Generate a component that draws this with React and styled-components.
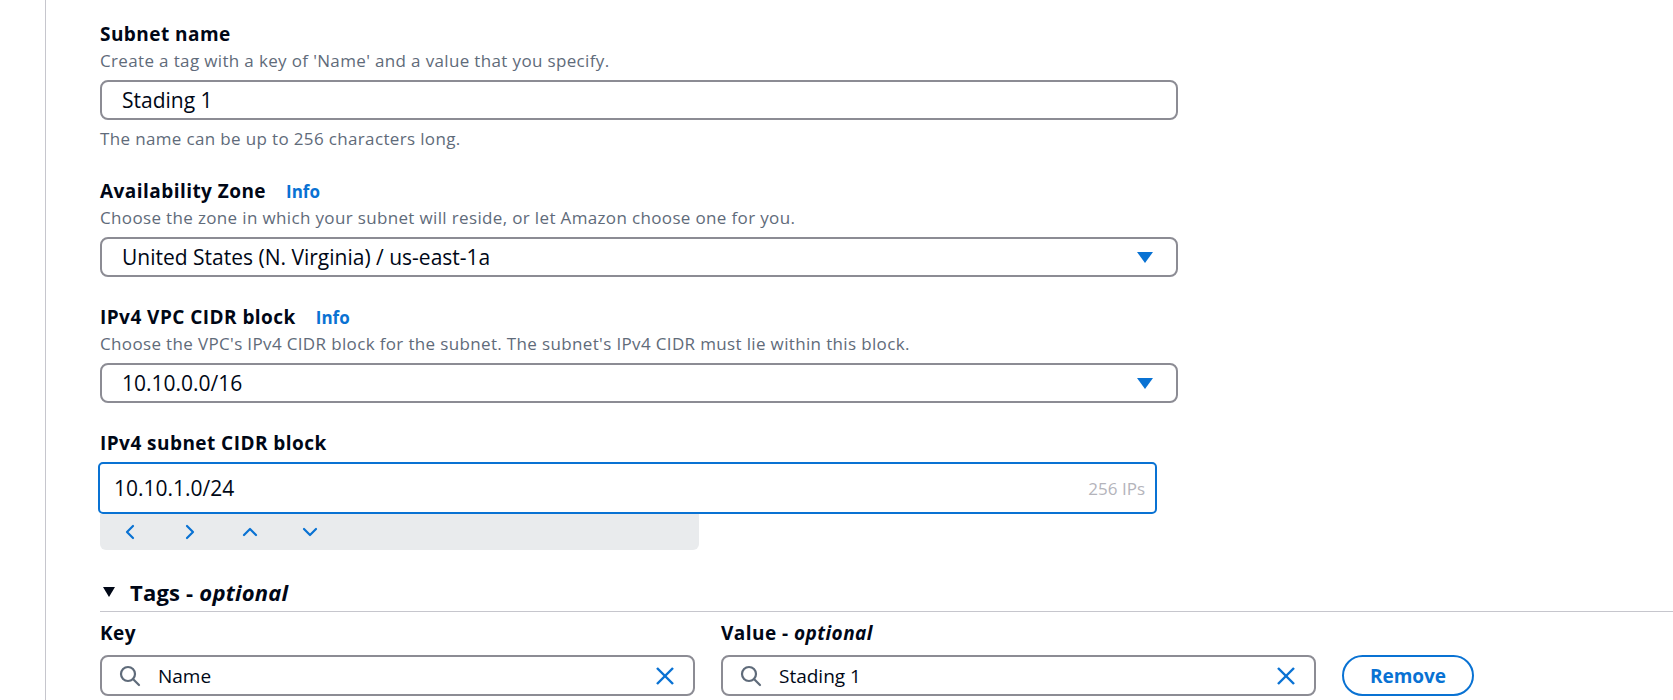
import React from "react";
import styled, { createGlobalStyle } from "styled-components";

const GlobalStyle = createGlobalStyle`
  body {
    margin: 0;
    background: #ffffff;
    font-family: "Open Sans", "Noto Sans", sans-serif;
    color: #000716;
  }
`;

const fields = [
  {
    label: "Availability Zone",
    info: true,
    description: "Choose the zone in which your subnet will reside, or let Amazon choose one for you.",
    value: "United States (N. Virginia) / us-east-1a",
  },
  {
    label: "IPv4 VPC CIDR block",
    info: true,
    description:
      "Choose the VPC's IPv4 CIDR block for the subnet. The subnet's IPv4 CIDR must lie within this block.",
    value: "10.10.0.0/16",
  },
];

function Caret() {
  return (
    <svg width="16" height="11" viewBox="0 0 16 11">
      <polygon points="0,0 16,0 8,11" fill="#0972d3" />
    </svg>
  );
}

function SearchIcon() {
  return (
    <svg width="22" height="22" viewBox="0 0 22 22" fill="none" stroke="#5f6b7a" strokeWidth="2.2">
      <circle cx="9" cy="9" r="7" />
      <line x1="14" y1="14" x2="20" y2="20" strokeLinecap="round" />
    </svg>
  );
}

function ClearIcon() {
  return (
    <svg width="20" height="20" viewBox="0 0 20 20" fill="none" stroke="#0972d3" strokeWidth="2.4">
      <line x1="2" y1="2" x2="18" y2="18" />
      <line x1="18" y1="2" x2="2" y2="18" />
    </svg>
  );
}

const chevrons = {
  left: { w: 10, h: 16, points: "8,2 2,8 8,14" },
  right: { w: 10, h: 16, points: "2,2 8,8 2,14" },
  up: { w: 16, h: 10, points: "2,8 8,2 14,8" },
  down: { w: 16, h: 10, points: "2,2 8,8 14,2" },
};

function Chevron({ dir }) {
  const c = chevrons[dir];
  return (
    <svg width={c.w} height={c.h} viewBox={`0 0 ${c.w} ${c.h}`} fill="none">
      <polyline points={c.points} stroke="#0972d3" strokeWidth="2.2" strokeLinejoin="round" strokeLinecap="round" />
    </svg>
  );
}

export default function App() {
  return (
    <>
      <GlobalStyle />
      <Page>
        <Main>
          <Field>
            <Label>Subnet name</Label>
            <Description>Create a tag with a key of 'Name' and a value that you specify.</Description>
            <TextInput>Stading 1</TextInput>
            <Hint>The name can be up to 256 characters long.</Hint>
          </Field>

          {fields.map((f) => (
            <Field key={f.label}>
              <LabelRow>
                <Label>{f.label}</Label>
                {f.info && <InfoLink>Info</InfoLink>}
              </LabelRow>
              <Description>{f.description}</Description>
              <Select>
                <span>{f.value}</span>
                <Caret />
              </Select>
            </Field>
          ))}

          <Field>
            <Label>IPv4 subnet CIDR block</Label>
            <FocusedInput>
              <span>10.10.1.0/24</span>
              <Count>256 IPs</Count>
            </FocusedInput>
            <Toolbar>
              <ToolButton>
                <Chevron dir="left" />
              </ToolButton>
              <ToolButton>
                <Chevron dir="right" />
              </ToolButton>
              <ToolButton>
                <Chevron dir="up" />
              </ToolButton>
              <ToolButton>
                <Chevron dir="down" />
              </ToolButton>
            </Toolbar>
          </Field>

          <TagsHeader>
            <Triangle />
            <span>
              Tags - <em>optional</em>
            </span>
          </TagsHeader>
          <TagRow>
            <TagColumn>
              <Label>Key</Label>
              <SearchInput>
                <SearchIcon />
                <SearchText>Name</SearchText>
                <ClearIcon />
              </SearchInput>
            </TagColumn>
            <TagColumn>
              <Label>
                Value - <em>optional</em>
              </Label>
              <SearchInput>
                <SearchIcon />
                <SearchText>Stading 1</SearchText>
                <ClearIcon />
              </SearchInput>
            </TagColumn>
            <RemoveButton>Remove</RemoveButton>
          </TagRow>
        </Main>
      </Page>
    </>
  );
}

const Page = styled.div`
  width: 1673px;
  height: 700px;
  overflow: hidden;
  display: flex;
`;

const Main = styled.div`
  margin-left: 45px;
  border-left: 1px solid #c6c6cd;
  padding: 22px 0 0 0;
  flex: 1;
  display: flex;
  flex-direction: column;
`;

const Field = styled.div`
  display: flex;
  flex-direction: column;
  padding-left: 54px;
  width: 1078px;
  margin-bottom: 28px;
`;

const LabelRow = styled.div`
  display: flex;
  align-items: baseline;
  gap: 20px;
`;

const Label = styled.div`
  font-size: 19px;
  font-weight: 700;
  line-height: 24px;
  letter-spacing: 0.45px;
  color: #000716;

  em {
    font-style: italic;
  }
`;

const InfoLink = styled.a`
  font-size: 17px;
  font-weight: 700;
  color: #0972d3;
  cursor: pointer;
`;

const Description = styled.div`
  margin-top: 3px;
  font-size: 17px;
  line-height: 24px;
  letter-spacing: 0.35px;
  color: #5f6b7a;
`;

const Hint = styled(Description)`
  margin-top: 7px;
`;

const TextInput = styled.div`
  margin-top: 7px;
  box-sizing: border-box;
  height: 40px;
  border: 2px solid #8c8c94;
  border-radius: 8px;
  padding: 0 20px;
  display: flex;
  align-items: center;
  font-size: 21px;
  color: #000716;
`;

const Select = styled(TextInput)`
  justify-content: space-between;
  padding-right: 23px;
`;

const FocusedInput = styled.div`
  margin-top: 7px;
  margin-left: -2px;
  width: 1059px;
  box-sizing: border-box;
  height: 52px;
  border: 2px solid #0972d3;
  border-radius: 5px;
  padding: 0 10px 0 14px;
  display: flex;
  align-items: center;
  justify-content: space-between;
  font-size: 21px;
  color: #000716;
`;

const Count = styled.span`
  font-size: 17px;
  color: #b4b4bb;
`;

const Toolbar = styled.div`
  width: 599px;
  height: 36px;
  box-sizing: border-box;
  background: #e9ebed;
  border-radius: 0 0 6px 6px;
  display: flex;
  align-items: center;
  gap: 20px;
  padding-left: 10px;
`;

const ToolButton = styled.span`
  width: 40px;
  display: flex;
  justify-content: center;
  align-items: center;
`;

const TagsHeader = styled.div`
  margin-top: -1px;
  margin-left: 54px;
  padding-bottom: 4px;
  border-bottom: 1px solid #c6c6cd;
  display: flex;
  align-items: center;
  gap: 15px;
  font-size: 22px;
  font-weight: 700;
  line-height: 30px;
  letter-spacing: 0.2px;
  padding-left: 3px;

  em {
    font-style: italic;
  }
`;

const Triangle = styled.span`
  width: 0;
  height: 0;
  border-left: 6px solid transparent;
  border-right: 6px solid transparent;
  border-top: 10px solid #000716;
`;

const TagRow = styled.div`
  margin-top: 9px;
  padding-left: 54px;
  display: flex;
  align-items: flex-end;
  gap: 26px;
`;

const TagColumn = styled.div`
  width: 595px;
  display: flex;
  flex-direction: column;
  gap: 10px;
`;

const SearchInput = styled.div`
  box-sizing: border-box;
  height: 41px;
  border: 2px solid #8c8c94;
  border-radius: 8px;
  padding: 0 18px 0 17px;
  display: flex;
  align-items: center;
  gap: 17px;
`;

const SearchText = styled.span`
  flex: 1;
  font-size: 19px;
  color: #000716;
`;

const RemoveButton = styled.button`
  width: 132px;
  height: 41px;
  box-sizing: border-box;
  border: 2px solid #0972d3;
  border-radius: 22px;
  background: #ffffff;
  color: #0972d3;
  font-family: "Open Sans", sans-serif;
  font-size: 19px;
  font-weight: 700;
  cursor: pointer;
`;
